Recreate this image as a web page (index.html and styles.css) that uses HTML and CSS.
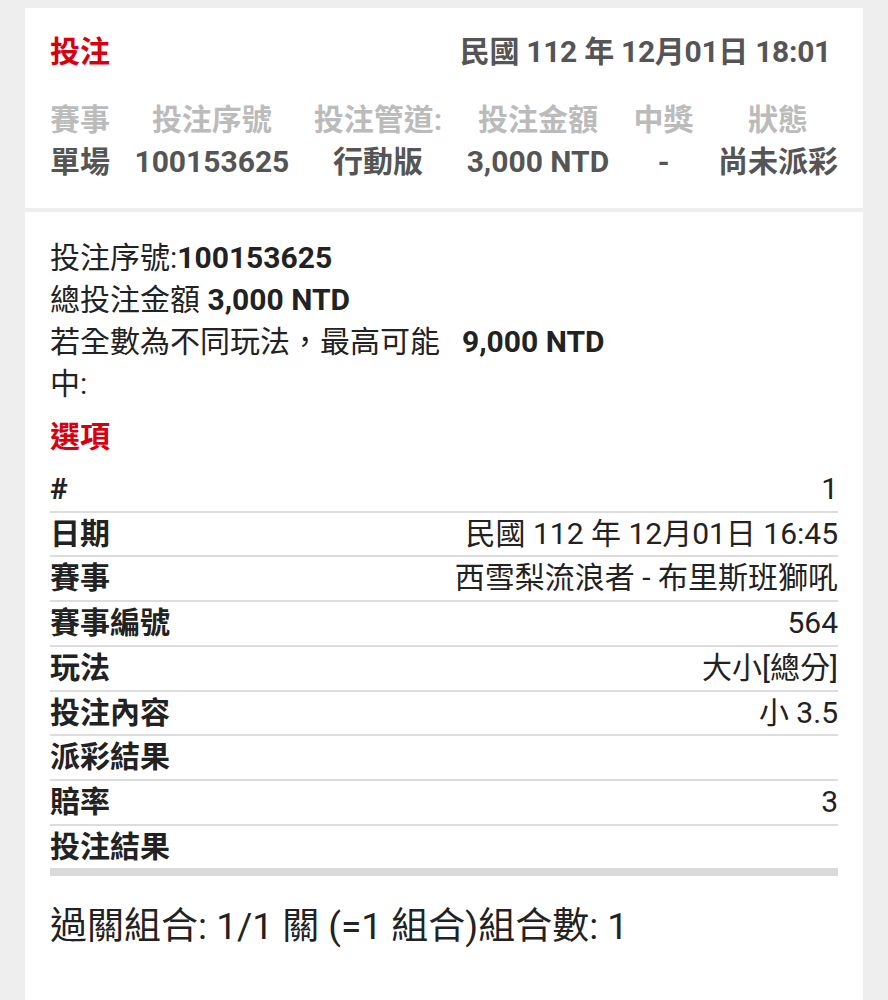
FILE: index.html
```html
<!DOCTYPE html>
<html lang="zh-Hant">
<head>
    <meta charset="UTF-8">
    <title>投注</title>
    <link rel="stylesheet" href="styles.css">
</head>
<body>
    <!-- Bet summary card -->
    <div class="card summary">
        <div class="summary-head">
            <span class="title">投注</span>
            <span class="bet-time">民國 112 年 12月01日 18:01</span>
        </div>
        <div class="summary-cols">
            <div class="col"><span class="col-label">賽事</span><span class="col-value">單場</span></div>
            <div class="col"><span class="col-label">投注序號</span><span class="col-value">100153625</span></div>
            <div class="col"><span class="col-label">投注管道:</span><span class="col-value">行動版</span></div>
            <div class="col"><span class="col-label">投注金額</span><span class="col-value">3,000 NTD</span></div>
            <div class="col"><span class="col-label">中獎</span><span class="col-value">-</span></div>
            <div class="col"><span class="col-label">狀態</span><span class="col-value">尚未派彩</span></div>
        </div>
    </div>

    <!-- Bet detail card -->
    <div class="card detail">
        <div class="line">投注序號:<b>100153625</b></div>
        <div class="line">總投注金額 <b>3,000 NTD</b></div>
        <div class="max-win">
            <span>若全數為不同玩法，最高可能中:</span>
            <b>9,000 NTD</b>
        </div>

        <div class="section-title">選項</div>
        <div class="options">
            <div class="opt-row"><span class="opt-label">#</span><span>1</span></div>
            <div class="opt-row"><span class="opt-label">日期</span><span>民國 112 年 12月01日 16:45</span></div>
            <div class="opt-row"><span class="opt-label">賽事</span><span>西雪梨流浪者 - 布里斯班獅吼</span></div>
            <div class="opt-row"><span class="opt-label">賽事編號</span><span>564</span></div>
            <div class="opt-row"><span class="opt-label">玩法</span><span>大小[總分]</span></div>
            <div class="opt-row"><span class="opt-label">投注內容</span><span>小 3.5</span></div>
            <div class="opt-row"><span class="opt-label">派彩結果</span><span></span></div>
            <div class="opt-row"><span class="opt-label">賠率</span><span>3</span></div>
            <div class="opt-row last"><span class="opt-label">投注結果</span><span></span></div>
        </div>

        <div class="combo">過關組合: 1/1 關 (=1 組合)組合數: 1</div>
    </div>
</body>
</html>
```

FILE: styles.css
```css
/* Page */
body {
    margin: 0;
    padding: 8px 25px 0;
    background-color: #eeeeee;
    font-family: Roboto, "Noto Sans CJK TC", sans-serif;
    font-size: 30px;
    line-height: 42px;
    color: #222222;
}

/* White panels */
.card {
    background-color: #ffffff;
    padding: 0 25px;
}

/* ---------- Summary card ---------- */
.summary {
    padding-top: 23px;
    padding-bottom: 25px;
    margin-bottom: 4px;
}

.summary-head {
    display: flex;
    justify-content: space-between;
    font-weight: bold;
    margin-bottom: 26px;
    padding-right: 7px;
}

.title {
    color: #d7000f;
}

.bet-time {
    color: #555555;
    letter-spacing: -0.3px;
}

.summary-cols {
    display: flex;
    justify-content: space-between;
    font-weight: bold;
}

.col {
    display: flex;
    flex-direction: column;
    align-items: center;
}

.col-label {
    color: #bbbbbb;
}

.col-value {
    color: #555555;
}

/* ---------- Detail card ---------- */
.detail {
    padding-top: 25px;
    padding-bottom: 80px;
}

.max-win {
    display: grid;
    grid-template-columns: 400px 1fr;
    column-gap: 12px;
}

.section-title {
    color: #d7000f;
    font-weight: bold;
    margin: 11px 0 10px;
}

.opt-row {
    display: flex;
    justify-content: space-between;
    line-height: 42.7px;
    border-bottom: 2px solid #dddddd;
}

.opt-row.last {
    border-bottom: 8px solid #dadada;
}

.opt-label {
    font-weight: bold;
}

.combo {
    font-size: 37px;
    margin-top: 30px;
    line-height: 42px;
}
```
